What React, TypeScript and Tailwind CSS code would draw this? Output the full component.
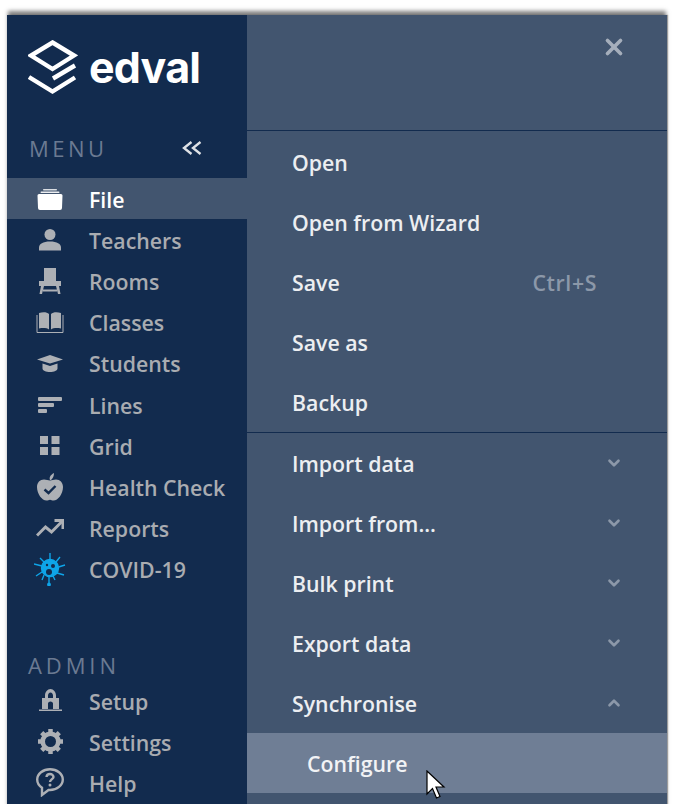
import { ReactNode } from 'react'
import { ChevronDown, ChevronUp, X } from 'lucide-react'

const FONT = 'font-["Open_Sans","Noto_Sans",sans-serif]'

const Logo = () => (
  <svg width="50" height="56" viewBox="0 0 50 56" fill="none" stroke="#fff" strokeWidth="4.4">
    <path d="M24.5 2.5 46 15.5 24.5 29 3 15.5Z" strokeLinejoin="miter" />
    <path d="M1 37 24.5 51.5 47 37.5" />
    <path d="M25 38.5 47 25.5" />
  </svg>
)

const FileIcon = () => (
  <svg width="26" height="22" viewBox="0 0 26 22" fill="#fff">
    <rect x="6" y="1" width="14" height="1.5" rx=".7" opacity=".8" />
    <rect x="3.5" y="3.5" width="19" height="1.5" rx=".7" opacity=".9" />
    <path d="M2 6h22q1.500 0 1.500 1.500L25 20q0 2-2 2H3q-2 0-2-2L.5 7.500Q.500 6 2 6Z" />
  </svg>
)
const PersonIcon = () => (
  <svg width="22" height="22" viewBox="0 0 22 22" fill="#adb0b5">
    <circle cx="11" cy="5.500" r="5.500" />
    <path d="M0 21.500v-3C0 15 4 12.500 11 12.500s11 2.500 11 6v3Z" />
  </svg>
)
const ChairIcon = () => (
  <svg width="22" height="26" viewBox="0 0 22 26" fill="#adb0b5">
    <path d="M5 0h12v13H5Z" />
    <path d="M0 13h22v5H0Z" />
    <path d="M2 18h3l-2 8H0.500ZM17 18h3l1.500 8H19ZM4 21.500h14v2H4Z" />
  </svg>
)
const BookIcon = () => (
  <svg width="28" height="21" viewBox="0 0 28 21" fill="#adb0b5">
    <path d="M3 1c4-1.200 8-1 10 1v15.500C11 16 7 15.700 3 16.500Z" />
    <path d="M25 1c-4-1.200-8-1-10 1v15.500c2-1.500 6-1.800 10-1Z" />
    <path d="M1 3v17.500h26V3" fill="none" stroke="#adb0b5" strokeWidth="1" />
  </svg>
)
const CapIcon = () => (
  <svg width="26" height="17" viewBox="0 0 26 17" fill="#adb0b5">
    <path d="M13 0 26 4.500 13 8.500 0 4.500Z" />
    <path d="M5.500 8.500 13 11l7.500-2.500v5c0 2-3.500 3.500-7.500 3.500s-7.500-1.500-7.500-3.500Z" />
  </svg>
)
const LinesIcon = () => (
  <svg width="24" height="16" viewBox="0 0 24 16" fill="#adb0b5">
    <rect width="24" height="4" rx="1" />
    <rect y="6" width="16" height="4" rx="1" />
    <rect y="12" width="9" height="4" rx="1" />
  </svg>
)
const GridIcon = () => (
  <svg width="20" height="19" viewBox="0 0 20 19" fill="#adb0b5">
    <rect width="8" height="8" />
    <rect x="11.500" width="8" height="8" />
    <rect y="11" width="8" height="8" />
    <rect x="11.500" y="11" width="8" height="8" />
  </svg>
)
const AppleIcon = () => (
  <svg width="26" height="28" viewBox="0 0 26 28" fill="#adb0b5">
    <path d="M13 7c-1-2 0-5 4-7 0 3-1 5-3 7Z" />
    <path d="M7 6.500c2.500 0 4 1 6 1s3.500-1 6-1c4 0 7 3 7 7.500 0 7-5 13.500-9.500 13.500-1.500 0-2.200-.8-3.500-.8s-2 .8-3.500.8C5 27.500 0 21 0 14c0-4.500 3-7.500 7-7.500Z" />
    <path d="M7.500 16.500 11.500 20 18.500 13" fill="none" stroke="#122b4e" strokeWidth="2.400" />
  </svg>
)
const TrendIcon = () => (
  <svg width="28" height="18" viewBox="0 0 28 18" fill="none" stroke="#adb0b5" strokeWidth="3">
    <path d="M1 16.500 9.500 8l6 5L26 2.500" />
    <path d="M18.500 1.500H27V10" />
  </svg>
)
const VirusIcon = () => (
  <svg width="32" height="34" viewBox="0 0 32 34" fill="none" stroke="#0ea5e9" strokeWidth="1.400">
    <circle cx="16" cy="16" r="8.500" fill="#0ea5e9" />
    <path d="M16 7V1M22 10l4-5M24.500 15 31 13M23 21l7 2M19 24l2 4M15 25v8M10 23l-2 5M8 20l-6 4M8 14 0 12M10 10 6 6" />
    <circle cx="15" cy="20" r="3" fill="#122b4e" stroke="none" />
    <circle cx="19" cy="14" r="2" fill="#122b4e" stroke="none" />
    <circle cx="13" cy="13" r="1.200" fill="#122b4e" stroke="none" />
    <circle cx="15" cy="32.500" r="1.200" fill="#0ea5e9" />
  </svg>
)
const LockIcon = () => (
  <svg width="23" height="22" viewBox="0 0 23 22" fill="#adb0b5">
    <path d="M6 9V6.500C6 3 8.500 0 11.500 0S17 3 17 6.500V9h-3V6.500C14 5 13 3.500 11.500 3.500S9 5 9 6.500V9Z" />
    <path fillRule="evenodd" d="M3 9h17v11H3ZM9 20h5v-5.500c0-1-1-2-2.500-2S9 13.500 9 14.500Z" />
    <rect y="20.500" width="23" height="1.500" />
  </svg>
)
const GearIcon = () => (
  <svg width="25" height="25" viewBox="0 0 25 25" fill="none">
    <circle cx="12.500" cy="12.500" r="7.800" stroke="#adb0b5" strokeWidth="4.600" />
    <path d="M12.500 0v4M12.500 21v4M0 12.500h4M21 12.500h4M3.700 3.700l3 3M18.300 18.300l3 3M3.700 21.300l3-3M18.300 6.700l3-3" stroke="#adb0b5" strokeWidth="4.500" />
  </svg>
)
const HelpIcon = () => (
  <svg width="28" height="29" viewBox="0 0 28 29" fill="none" stroke="#adb0b5" strokeWidth="2.400">
    <path d="M14 1.200C7 1.200 1.200 5.800 1.200 11.500c0 3.500 2 6.300 4.800 8.200V27l6.500-5H14c7 0 12.800-4.800 12.800-10.500S21 1.200 14 1.200Z" />
    <path d="M10.500 9c.2-2 1.700-3 3.500-3s3.500 1.200 3.500 3-3.500 2.600-3.500 5" strokeWidth="2.400" />
    <circle cx="14" cy="17" r="1.500" fill="#adb0b5" stroke="none" />
  </svg>
)
const CollapseIcon = () => (
  <svg className="mt-[8px]" width="20" height="16" viewBox="0 0 20 16" fill="none" stroke="#dfe2e6" strokeWidth="2.400">
    <path d="M9.500 2 2 8l7.500 6" />
    <path d="M18.500 2 11 8l7.500 6" />
  </svg>
)

type NavItem = { label: string; icon: ReactNode; active?: boolean }

const menuItems: NavItem[] = [
  { label: 'File', icon: <FileIcon />, active: true },
  { label: 'Teachers', icon: <PersonIcon /> },
  { label: 'Rooms', icon: <ChairIcon /> },
  { label: 'Classes', icon: <BookIcon /> },
  { label: 'Students', icon: <CapIcon /> },
  { label: 'Lines', icon: <LinesIcon /> },
  { label: 'Grid', icon: <GridIcon /> },
  { label: 'Health Check', icon: <AppleIcon /> },
  { label: 'Reports', icon: <TrendIcon /> },
  { label: 'COVID-19', icon: <VirusIcon /> }
]

const adminItems: NavItem[] = [
  { label: 'Setup', icon: <LockIcon /> },
  { label: 'Settings', icon: <GearIcon /> },
  { label: 'Help', icon: <HelpIcon /> }
]

const NavRow = ({ item }: { item: NavItem }) => (
  <div className={`flex h-[41.2px] items-center ${item.active ? 'bg-[#42556f] text-white' : 'text-[#a9acb1]'}`}>
    <div className="flex w-[82px] justify-center pl-[4px]">{item.icon}</div>
    <span className="pt-[2px] text-[21.3px] font-semibold">{item.label}</span>
  </div>
)

const PanelRow = ({ label, hint, open }: { label: string; hint?: string; open?: boolean }) => (
  <div className="flex h-[60px] items-center justify-between pl-[45px] pr-[44px]">
    <span className="pt-[2px] text-[21.3px] font-semibold text-[#eceef1]">{label}</span>
    {hint && <span className="mr-[26px] pt-[2px] text-[21.3px] font-semibold tracking-[0.6px] text-[#8c98a9]">{hint}</span>}
    {open === false && <ChevronDown size={18} strokeWidth={3.5} className="text-[#8c98a9]" />}
    {open === true && <ChevronUp size={18} strokeWidth={3.5} className="text-[#8c98a9]" />}
  </div>
)

export default function App() {
  return (
    <div className={`h-[804px] overflow-hidden bg-white pt-[15px] pl-[7px] ${FONT}`}>
      <div className="relative flex h-[820px] w-[660px] shadow-[0_-5px_4px_-1px_rgba(0,0,0,0.5),1px_0_1px_rgba(0,0,0,0.3)]">
        <aside className="w-[240px] shrink-0 bg-[#122b4e]">
          <div className="flex h-[115px] items-start gap-[11px] pl-[21px] pt-[25px]">
            <Logo />
            <span className="-mt-[5px] font-['Inter',sans-serif] text-[43px] font-bold tracking-[-0.8px] text-white">edval</span>
          </div>
          <div className="flex h-[48px] items-start justify-between pr-[45px] pl-[22px] pt-[2px]">
            <span className="text-[22px] font-medium tracking-[3.5px] text-[#6b7a92]">MENU</span>
            <CollapseIcon />
          </div>
          {menuItems.map(item => (
            <NavRow key={item.label} item={item} />
          ))}
          <div className="mt-[60px] flex h-[30px] items-center pl-[21px] pt-[1px]">
            <span className="text-[22px] font-medium tracking-[3.9px] text-[#6b7a92]">ADMIN</span>
          </div>
          {adminItems.map(item => (
            <NavRow key={item.label} item={item} />
          ))}
        </aside>
        <main className="flex-1 bg-[#42556f]">
          <div className="flex h-[116px] justify-end border-b border-[#122b4e] pr-[40px] pt-[19px]">
            <X size={26} strokeWidth={3.4} className="text-[#a5aebb]" />
          </div>
          <div className="border-b border-[#122b4e] pt-[1px]">
            <PanelRow label="Open" />
            <PanelRow label="Open from Wizard" />
            <PanelRow label="Save" hint="Ctrl+S" />
            <PanelRow label="Save as" />
            <PanelRow label="Backup" />
          </div>
          <PanelRow label="Import data" open={false} />
          <PanelRow label="Import from..." open={false} />
          <PanelRow label="Bulk print" open={false} />
          <PanelRow label="Export data" open={false} />
          <PanelRow label="Synchronise" open={true} />
          <div className="flex h-[60px] items-center bg-[#6f7e95] pl-[60px]">
            <span className="pt-[2px] text-[21.3px] font-semibold text-[#f2f3f5]">Configure</span>
          </div>
        </main>
        <svg className="absolute left-[419px] top-[755px]" width="20" height="29" viewBox="0 0 20 29">
          <path d="M1 1v23l5.500-5.500 4 9.500 3.500-1.500-4-9.500H18Z" fill="#fff" stroke="#000" strokeWidth="1.200" />
        </svg>
      </div>
    </div>
  )
}
